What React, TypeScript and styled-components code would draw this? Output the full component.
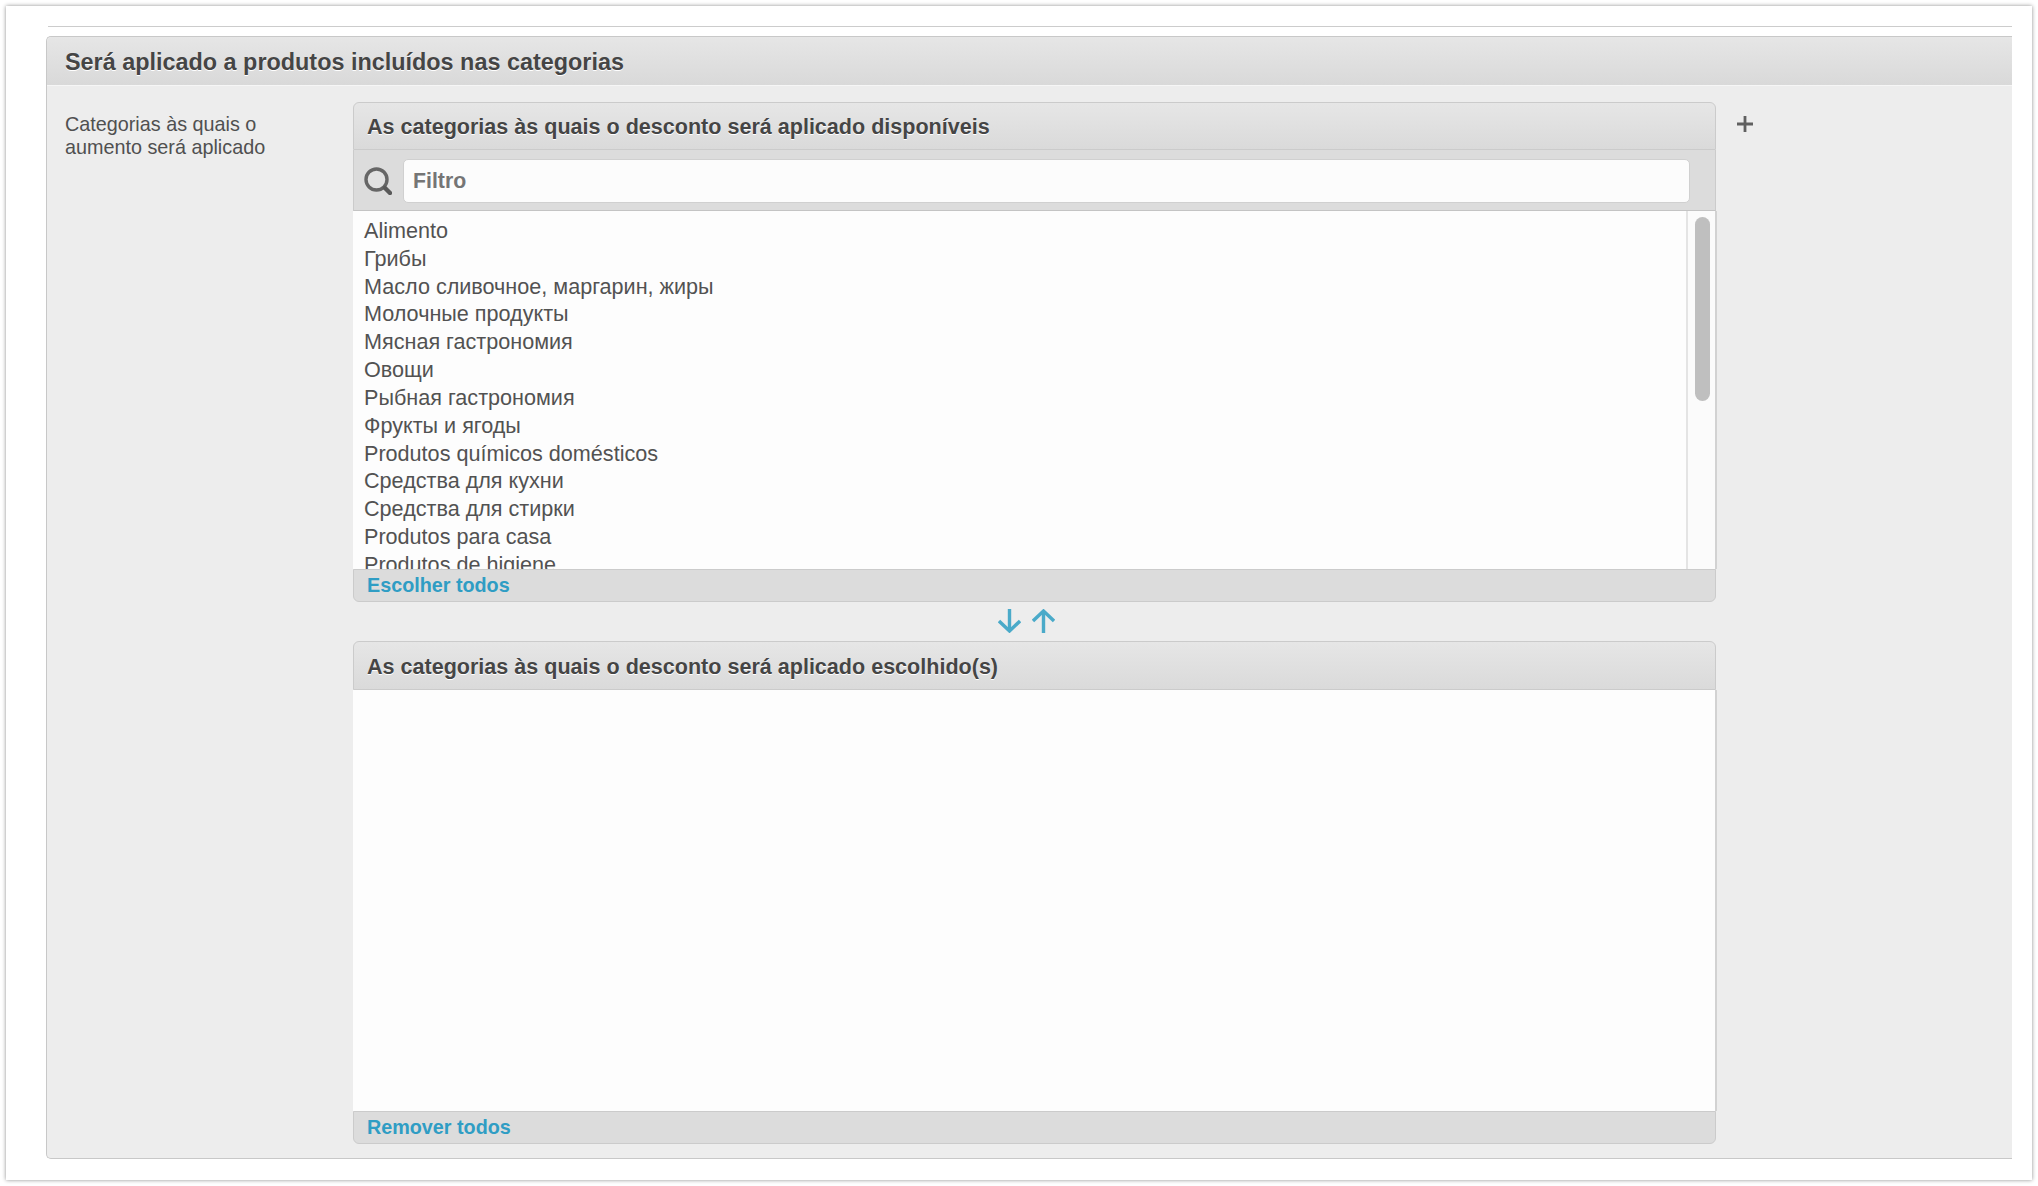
import React from "react";
import styled, { createGlobalStyle } from "styled-components";

const Global = createGlobalStyle`
  html, body { margin: 0; padding: 0; background: #fff; }
  body { font-family: "Liberation Sans", Arial, sans-serif; width: 2038px; height: 1186px; overflow: hidden; }
  * { box-sizing: border-box; }
`;

const Page = styled.div`
  width: 2038px;
  height: 1186px;
  padding: 6px 6px 6px 6px;
`;

const Sheet = styled.div`
  width: 2026px;
  height: 1174px;
  background: #fff;
  box-shadow: 0 0 4px rgba(0, 0, 0, 0.45);
  padding: 20px 20px 0 40px;
  display: flex;
  flex-direction: column;
`;

const Rule = styled.div`
  height: 1px;
  margin-left: 2px;
  background: #ccc;
  flex: none;
`;

const Panel = styled.section`
  margin-top: 9px;
  height: 1123px;
  background: #ededed;
  border: 1px solid #c8c8c8;
  border-right: 0;
  border-radius: 5px 0 0 5px;
  display: flex;
  flex-direction: column;
`;

const PanelHead = styled.h2`
  margin: 0;
  height: 49px;
  flex: none;
  padding: 2px 0 0 18px;
  display: flex;
  align-items: center;
  font-size: 23.4px;
  font-weight: 700;
  color: #454545;
  text-shadow: 0 1px 0 #fff;
  background: linear-gradient(#e6e6e6, #d9d9d9);
  border-bottom: 1px solid #f6f6f6;
  border-radius: 5px 0 0 0;
`;

const PanelBody = styled.div`
  display: flex;
  padding: 16px 0 0 18px;
`;

const FieldLabel = styled.div`
  width: 288px;
  flex: none;
  padding-top: 11px;
  font-size: 19.8px;
  line-height: 23px;
  color: #505050;
`;

const Column = styled.div`
  width: 1363px;
  flex: none;
  display: flex;
  flex-direction: column;
`;

const AddButton = styled.div`
  margin: 13px 0 0 20px;
  width: 18px;
  height: 18px;
  flex: none;
  color: #606060;
`;

const BoxHead = styled.h3<{ $tall?: boolean }>`
  margin: 0;
  height: ${(p) => (p.$tall ? 49 : 48)}px;
  padding: 2px 0 0 13px;
  display: flex;
  align-items: center;
  font-size: 21.55px;
  font-weight: 700;
  color: #454545;
  text-shadow: 0 1px 0 #fff;
  background: linear-gradient(#e6e6e6, #dadada);
  border: 1px solid #cbcbcb;
  border-radius: 6px 6px 0 0;
  width: 1363px;
`;

const FilterBar = styled.div`
  height: 61px;
  width: 1363px;
  padding: 10px 25px 8px 10px;
  display: flex;
  align-items: center;
  gap: 11px;
  background: #dcdcdc;
  border-left: 1px solid #cbcbcb;
  border-right: 1px solid #cbcbcb;
  border-bottom: 1px solid #c4c4c4;
`;

const FilterInput = styled.div`
  flex: 1;
  height: 44px;
  padding-left: 9px;
  display: flex;
  align-items: center;
  background: #fcfcfc;
  border: 1px solid #d0d0d0;
  border-radius: 5px;
  font-size: 21.3px;
  font-weight: 700;
  color: #757575;
`;

const ListWrap = styled.div`
  height: 358px;
  width: 1364px;
  display: flex;
  background: #fdfdfd;
  border-right: 2px solid #d2d2d2;
`;

const List = styled.ul`
  flex: 1;
  margin: 0;
  padding: 6px 0 0 11px;
  list-style: none;
  overflow: hidden;
`;

const Item = styled.li`
  height: 27.83px;
  line-height: 28px;
  font-size: 21.6px;
  color: #525252;
  white-space: nowrap;
`;

const Track = styled.div`
  width: 29px;
  flex: none;
  padding: 6px 0 0 7px;
  background: #fbfbfb;
  border-left: 2px solid #e4e4e4;
`;

const Thumb = styled.div`
  width: 15px;
  height: 184px;
  border-radius: 8px;
  background: #bfbfbf;
`;

const BoxFoot = styled.div`
  height: 33px;
  width: 1363px;
  padding: 0 0 0 13px;
  display: flex;
  align-items: center;
  background: #dcdcdc;
  border: 1px solid #cbcbcb;
  border-radius: 0 0 6px 6px;
`;

const Link = styled.a`
  font-size: 19.75px;
  font-weight: 700;
  color: #2f9dc4;
`;

const Transfer = styled.div`
  height: 39px;
  padding: 7px 0 0 645px;
  display: flex;
  gap: 11px;
  color: #4aaac9;
`;

const ChosenArea = styled.div`
  height: 421px;
  width: 1364px;
  background: #fdfdfd;
  border-right: 2px solid #d2d2d2;
`;

const items = [
  "Alimento",
  "Грибы",
  "Масло сливочное, маргарин, жиры",
  "Молочные продукты",
  "Мясная гастрономия",
  "Овощи",
  "Рыбная гастрономия",
  "Фрукты и ягоды",
  "Produtos químicos domésticos",
  "Средства для кухни",
  "Средства для стирки",
  "Produtos para casa",
  "Produtos de higiene",
];

const Arrow = ({ up }: { up?: boolean }) => (
  <svg width="23" height="24" viewBox="0 0 23 24" fill="none" stroke="currentColor" strokeWidth="3.4" style={up ? { transform: "scaleY(-1)" } : undefined}>
    <path d="M11.5 0v22" />
    <path d="M1 12l10.5 10L22 12" />
  </svg>
);

export default function App() {
  return (
    <Page>
      <Global />
      <Sheet>
        <Rule />
        <Panel>
          <PanelHead>Será aplicado a produtos incluídos nas categorias</PanelHead>
          <PanelBody>
            <FieldLabel>
              Categorias às quais o
              <br />
              aumento será aplicado
            </FieldLabel>
            <Column>
              <BoxHead>As categorias às quais o desconto será aplicado disponíveis</BoxHead>
              <FilterBar>
                <svg width="28" height="28" viewBox="0 0 28 28" fill="none" style={{ flex: "none" }}>
                  <circle cx="12.5" cy="12.5" r="10.5" stroke="#666" strokeWidth="3.4" fill="#e2e2e2" />
                  <path d="M21 21l5 5" stroke="#5a5a5a" strokeWidth="4.4" strokeLinecap="round" />
                </svg>
                <FilterInput>Filtro</FilterInput>
              </FilterBar>
              <ListWrap>
                <List>
                  {items.map((t) => (
                    <Item key={t}>{t}</Item>
                  ))}
                </List>
                <Track>
                  <Thumb />
                </Track>
              </ListWrap>
              <BoxFoot>
                <Link>Escolher todos</Link>
              </BoxFoot>
              <Transfer>
                <Arrow />
                <Arrow up />
              </Transfer>
              <BoxHead $tall>As categorias às quais o desconto será aplicado escolhido(s)</BoxHead>
              <ChosenArea />
              <BoxFoot>
                <Link>Remover todos</Link>
              </BoxFoot>
            </Column>
            <AddButton>
              <svg width="18" height="18" viewBox="0 0 18 18" stroke="currentColor" strokeWidth="2.8">
                <path d="M9 1v16M1 9h16" />
              </svg>
            </AddButton>
          </PanelBody>
        </Panel>
      </Sheet>
    </Page>
  );
}
